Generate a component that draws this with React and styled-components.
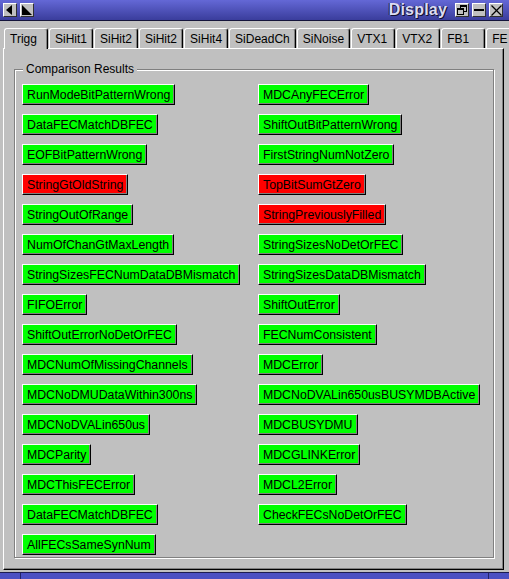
import React from 'react'
import styled, { createGlobalStyle } from 'styled-components'

const GlobalStyle = createGlobalStyle`
  html, body {
    margin: 0;
    padding: 0;
    background: #c0c0c0;
  }
  body {
    font-family: 'Liberation Sans', Arial, sans-serif;
    font-size: 12px;
    color: #000;
  }
`

const tabs = ['Trigg', 'SiHit1', 'SiHit2', 'SiHit2', 'SiHit4', 'SiDeadCh', 'SiNoise', 'VTX1', 'VTX2', 'FB1', 'FE']

// [left, right] pairs, a leading ! marks a failed (red) check
const results = [
  ['RunModeBitPatternWrong', 'MDCAnyFECError'],
  ['DataFECMatchDBFEC', 'ShiftOutBitPatternWrong'],
  ['EOFBitPatternWrong', 'FirstStringNumNotZero'],
  ['!StringGtOldString', '!TopBitSumGtZero'],
  ['StringOutOfRange', '!StringPreviouslyFilled'],
  ['NumOfChanGtMaxLength', 'StringSizesNoDetOrFEC'],
  ['StringSizesFECNumDataDBMismatch', 'StringSizesDataDBMismatch'],
  ['FIFOError', 'ShiftOutError'],
  ['ShiftOutErrorNoDetOrFEC', 'FECNumConsistent'],
  ['MDCNumOfMissingChannels', 'MDCError'],
  ['MDCNoDMUDataWithin300ns', 'MDCNoDVALin650usBUSYMDBActive'],
  ['MDCNoDVALin650us', 'MDCBUSYDMU'],
  ['MDCParity', 'MDCGLINKError'],
  ['MDCThisFECError', 'MDCL2Error'],
  ['DataFECMatchDBFEC', 'CheckFECsNoDetOrFEC'],
  ['AllFECsSameSynNum', null],
]

const App = () => {
  const cells = results.flat()
  return (
    <Window>
      <GlobalStyle />
      <TitleBar>
        <BtnGroup>
          <WinButton>
            <svg width='10' height='10' viewBox='0 0 10 10'>
              <polygon points='7,0 7,10 1,5' fill='#000' />
            </svg>
          </WinButton>
          <WinButton>
            <svg width='10' height='10' viewBox='0 0 10 10'>
              <polygon points='0,0 0,10 10,10' fill='#000' />
            </svg>
          </WinButton>
        </BtnGroup>
        <Title>Display</Title>
        <BtnGroup>
          <WinButton>
            <svg width='10' height='10' viewBox='0 0 10 10' fill='none' stroke='#000'>
              <rect x='3.5' y='0.5' width='6' height='6' strokeWidth='1' />
              <rect x='0.5' y='3.5' width='6' height='6' fill='#c0c0c0' strokeWidth='1' />
              <line x1='3.5' y1='1.5' x2='9.5' y2='1.5' />
              <line x1='0.5' y1='4.5' x2='6.5' y2='4.5' />
            </svg>
          </WinButton>
          <WinButton>
            <svg width='10' height='10' viewBox='0 0 10 10'>
              <rect x='0' y='4' width='10' height='2' fill='#000' />
            </svg>
          </WinButton>
          <WinButton>
            <svg width='11' height='11' viewBox='0 0 11 11' stroke='#000' strokeWidth='1.3'>
              <line x1='0.5' y1='0.5' x2='10.5' y2='10.5' />
              <line x1='10.5' y1='0.5' x2='0.5' y2='10.5' />
            </svg>
          </WinButton>
        </BtnGroup>
      </TitleBar>

      <TabRow>
        {tabs.map((t, i) => (
          <Tab key={i} $active={i === 0}>{t}</Tab>
        ))}
      </TabRow>

      <Panel>
        <Group>
          <Legend>Comparison Results</Legend>
          <Grid>
            {cells.map((c, i) => {
              if (!c) return <span key={i} />
              const bad = c.startsWith('!')
              return (
                <CheckButton key={i} $bad={bad}>
                  {bad ? c.slice(1) : c}
                </CheckButton>
              )
            })}
          </Grid>
        </Group>
      </Panel>

      <BottomBar>
        <Handle />
        <Handle $grow />
        <Handle />
      </BottomBar>
    </Window>
  )
}

const Window = styled.div`
  width: 509px;
  height: 579px;
  display: flex;
  flex-direction: column;
  background: #c0c0c0;
  overflow: hidden;
`

const TitleBar = styled.div`
  height: 20px;
  flex: none;
  display: flex;
  align-items: center;
  padding: 0 6px 0 3px;
  background: linear-gradient(#6468d6, #3a3d9c);
  border-bottom: 1px solid #14143a;
`

const BtnGroup = styled.div`
  display: flex;
  gap: 3px;
`

const WinButton = styled.div`
  width: 14px;
  height: 14px;
  box-sizing: border-box;
  display: flex;
  align-items: center;
  justify-content: center;
  background: #c0c0c0;
  border-top: 1px solid #fff;
  border-left: 1px solid #fff;
  border-right: 1px solid #303030;
  border-bottom: 1px solid #303030;
`

const Title = styled.div`
  flex: 1;
  text-align: right;
  margin-right: 8px;
  font-weight: bold;
  font-size: 16px;
  color: #dcdcf2;
  text-shadow: 1px 1px 0 #101030, -1px 0 0 #202050;
  letter-spacing: 0.2px;
`

const TabRow = styled.div`
  display: flex;
  margin-top: 7px;
  padding-left: 4px;
  height: 20px;
  flex: none;
  position: relative;
  z-index: 1;
`

const Tab = styled.div`
  min-width: 44px;
  flex: none;
  box-sizing: border-box;
  height: ${(p) => (p.$active ? '21px' : '20px')};
  margin-right: 1px;
  padding: 2px 5px 0 5px;
  font-size: 12px;
  line-height: 17px;
  background: #c0c0c0;
  border-top: 1px solid #fff;
  border-left: 1px solid #fff;
  border-right: 1px solid #000;
  box-shadow: inset -1px 0 0 #808080;
  border-radius: 3px 3px 0 0;
  white-space: nowrap;
`

const Panel = styled.div`
  flex: none;
  height: 522px;
  box-sizing: border-box;
  margin: 0 5px 0 3px;
  display: flex;
  flex-direction: column;
  padding: 13px 8px 10px 10px;
  border-top: 1px solid #fff;
  border-left: 1px solid #fff;
  border-right: 1px solid #000;
  border-bottom: 1px solid #000;
  box-shadow: inset -1px -1px 0 #808080;
`

const Group = styled.fieldset`
  flex: 1;
  margin: 0 1px 1px 0;
  padding: 8px 7px 0 7px;
  min-width: 0;
  border: 1px solid #808080;
  box-shadow: 1px 1px 0 #fff, inset 1px 1px 0 #fff;
`

const Legend = styled.legend`
  padding: 0 3px;
  margin-left: 1px;
  font-size: 12px;
  line-height: 14px;
  background: #c0c0c0;
`

const Grid = styled.div`
  display: grid;
  grid-template-columns: 236px 1fr;
  row-gap: 9px;
  justify-items: start;
`

const CheckButton = styled.div`
  height: 21px;
  box-sizing: border-box;
  padding: 0 4px 0 4px;
  display: flex;
  align-items: center;
  font-size: 12.3px;
  white-space: nowrap;
  background: ${(p) => (p.$bad ? '#ff0000' : '#00ff00')};
  border-top: 1px solid #fff;
  border-left: 1px solid #fff;
  border-right: 1px solid #000;
  border-bottom: 1px solid #000;
  box-shadow: inset -1px -1px 0 #808080;
`

const BottomBar = styled.div`
  margin-top: 2px;
  height: 7px;
  flex: none;
  display: flex;
  border-top: 1px solid #1c1c50;
  box-sizing: border-box;
`

const Handle = styled.div`
  width: ${(p) => (p.$grow ? 'auto' : '20px')};
  flex: ${(p) => (p.$grow ? 1 : 'none')};
  background: #4b50c2;
  border-right: 1px solid #23236a;
  &:last-child {
    border-right: none;
  }
`

export default App
